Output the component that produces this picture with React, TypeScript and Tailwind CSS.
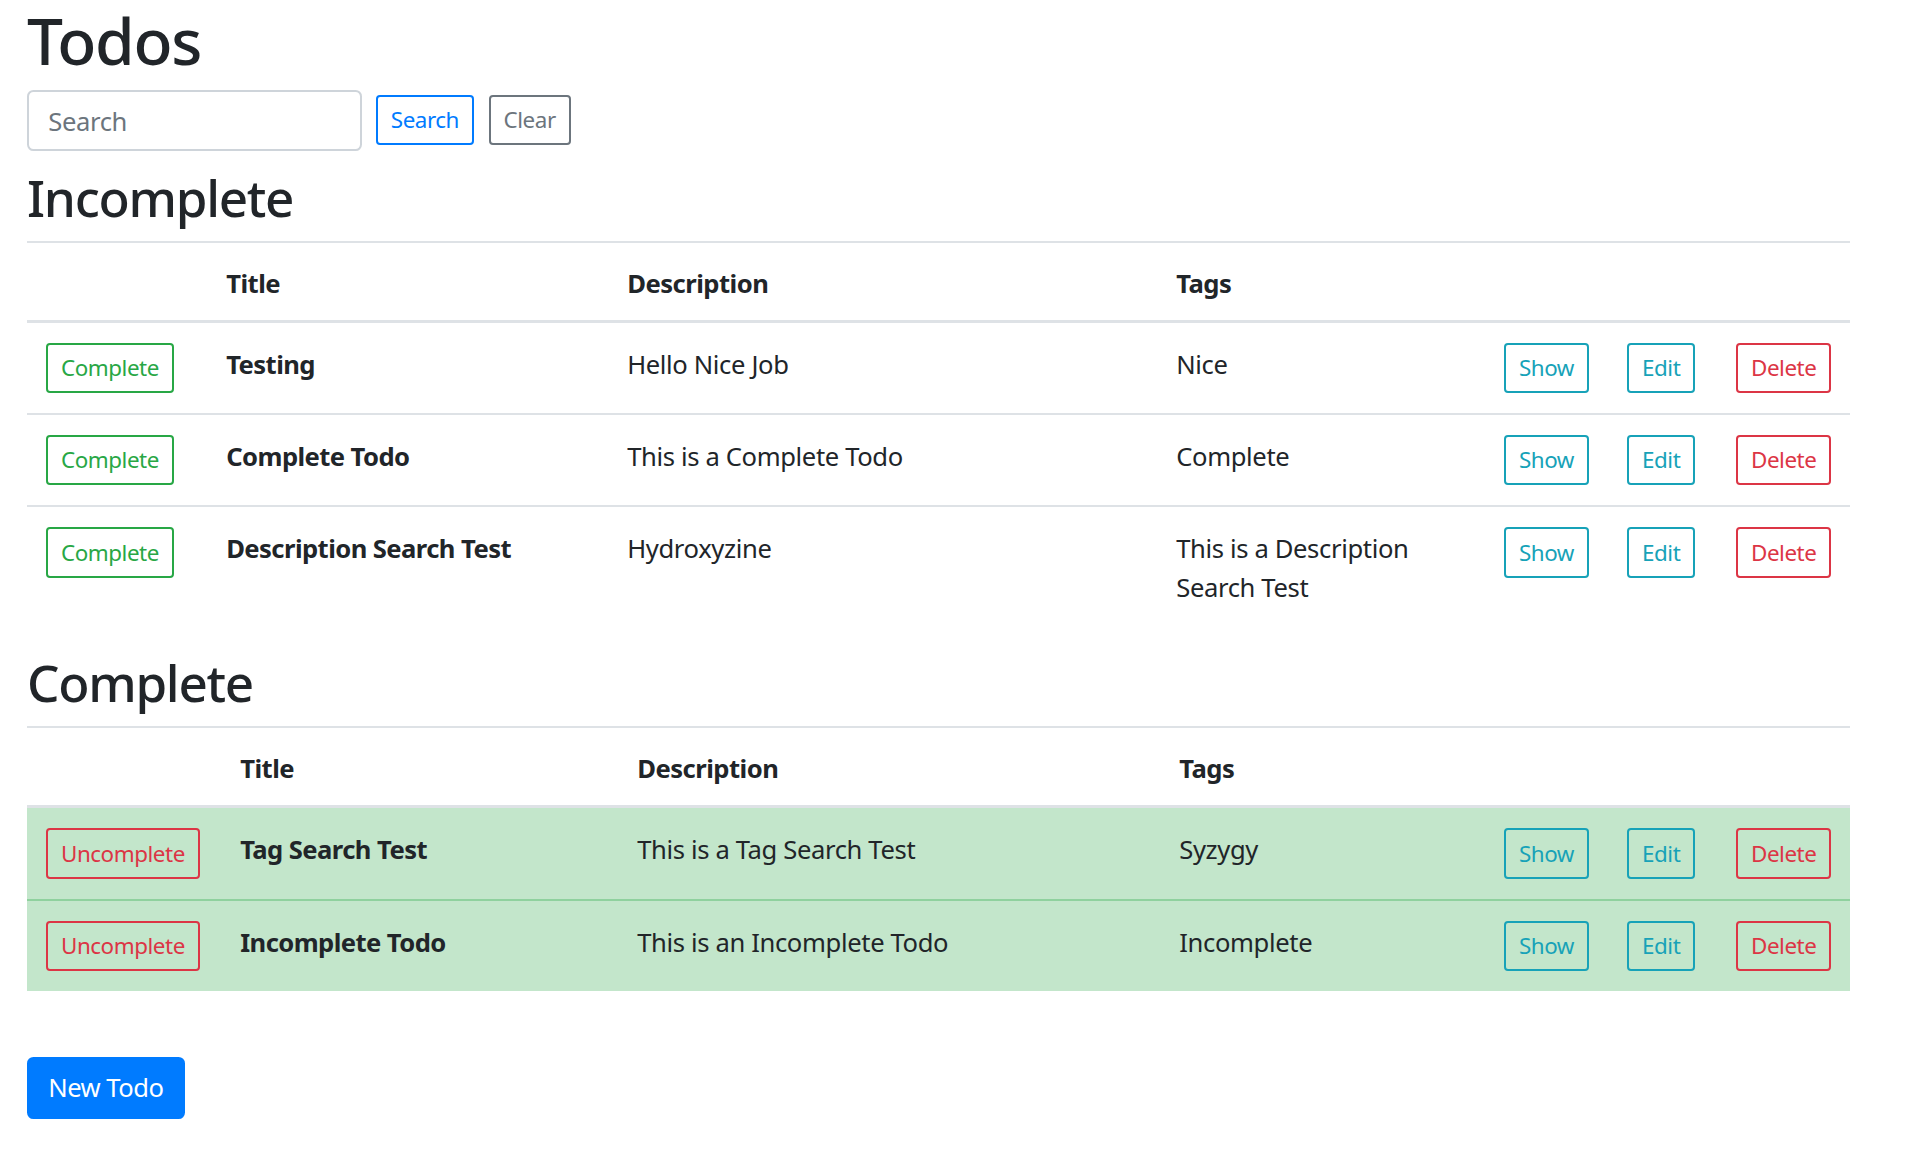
import React from 'react';

type Todo = { title: string; description: string; tags: string };

const incomplete: Todo[] = [
  { title: 'Testing', description: 'Hello Nice Job', tags: 'Nice' },
  { title: 'Complete Todo', description: 'This is a Complete Todo', tags: 'Complete' },
  { title: 'Description Search Test', description: 'Hydroxyzine', tags: 'This is a Description Search Test' },
];

const complete: Todo[] = [
  { title: 'Tag Search Test', description: 'This is a Tag Search Test', tags: 'Syzygy' },
  { title: 'Incomplete Todo', description: 'This is an Incomplete Todo', tags: 'Incomplete' },
];

const btnSm =
  'inline-block align-middle bg-transparent border-2 rounded-[4px] px-[12.8px] py-[6.4px] text-[22.4px] leading-[1.5] tracking-[-0.02em]';

const TodoTable = ({ todos, done, widths }: { todos: Todo[]; done: boolean; widths: string[] }) => {
  const head = 'px-[19.2px] pt-[22px] pb-[16.4px] text-left font-bold align-bottom border-t-2 border-b-[3px] border-[#dee2e6] tracking-[-0.02em]';
  return (
    <table className="w-full table-fixed border-collapse mb-[25.6px]">
      <colgroup>
        {widths.map((w, i) => (
          <col key={i} className={w} />
        ))}
      </colgroup>
      <thead>
        <tr>
          <th className={head}></th>
          <th className={head}>Title</th>
          <th className={head}>Description</th>
          <th className={head}>Tags</th>
          <th className={head} colSpan={3}></th>
        </tr>
      </thead>
      <tbody>
        {todos.map((todo, index) => {
          const tone = done ? 'border-t-2 border-[#8fd19e] bg-[#c3e6cb]' : 'border-t-2 border-[#dee2e6]';
          const btnCell = `px-[19.2px] pt-[20px] pb-[20px] align-top ${tone}`;
          const textCell = `px-[19.2px] pt-[23px] pb-[16px] align-top ${tone}`;
          return (
            <tr key={index}>
              <td className={btnCell}>
                {done ? (
                  <button className={`${btnSm} border-[#dc3545] text-[#dc3545]`}>Uncomplete</button>
                ) : (
                  <button className={`${btnSm} border-[#28a745] text-[#28a745]`}>Complete</button>
                )}
              </td>
              <td className={`${textCell} font-bold tracking-[-0.022em]`}>{todo.title}</td>
              <td className={textCell}>{todo.description}</td>
              <td className={textCell}>{todo.tags}</td>
              <td className={btnCell}>
                <button className={`${btnSm} border-[#17a2b8] text-[#17a2b8]`}>Show</button>
              </td>
              <td className={btnCell}>
                <button className={`${btnSm} border-[#17a2b8] text-[#17a2b8]`}>Edit</button>
              </td>
              <td className={btnCell}>
                <button className={`${btnSm} border-[#dc3545] text-[#dc3545]`}>Delete</button>
              </td>
            </tr>
          );
        })}
      </tbody>
    </table>
  );
};

const App = () => {
  return (
    <div className="min-h-screen bg-white px-[27px] pr-[70px] font-['Segoe_UI','Noto_Sans',sans-serif] text-[25.6px] leading-[1.5] tracking-[-0.014em] text-[#212529]">
      <h1 className="text-[64px] font-medium leading-[1.2] pt-[3px] mb-[9.8px] tracking-[-0.02em]">Todos</h1>
      <form className="flex items-center" onSubmit={(e) => e.preventDefault()}>
        <input
          type="text"
          placeholder="Search"
          className="w-[335px] h-[61px] px-[19.2px] pt-[2px] border-2 border-[#ced4da] rounded-[6.4px] text-[25.6px] placeholder:text-[#6c757d] outline-none"
        />
        <button type="submit" className={`${btnSm} ml-[14px] border-[#007bff] text-[#007bff]`}>Search</button>
        <button type="button" className={`${btnSm} ml-[15px] border-[#6c757d] text-[#6c757d]`}>Clear</button>
      </form>

      <h2 className="text-[51.2px] font-medium leading-[1.2] mt-[16px] mb-[12.8px] tracking-[-0.025em]">Incomplete</h2>
      <TodoTable
        todos={incomplete}
        done={false}
        widths={['w-[180px]', 'w-[401px]', 'w-[549px]', 'w-[328px]', 'w-[123px]', 'w-[109px]', 'w-[133px]']}
      />

      <h2 className="text-[51.2px] font-medium leading-[1.2] mt-[29px] mb-[12.8px] tracking-[-0.025em]">Complete</h2>
      <TodoTable
        todos={complete}
        done={true}
        widths={['w-[194px]', 'w-[397px]', 'w-[542px]', 'w-[325px]', 'w-[123px]', 'w-[109px]', 'w-[133px]']}
      />

      <button className="mt-[40px] bg-[#007bff] text-white border-2 border-[#007bff] rounded-[6.4px] px-[19.2px] py-[10px] text-[25.6px] leading-[1.5] tracking-[-0.02em]">
        New Todo
      </button>
    </div>
  );
};

export default App;
